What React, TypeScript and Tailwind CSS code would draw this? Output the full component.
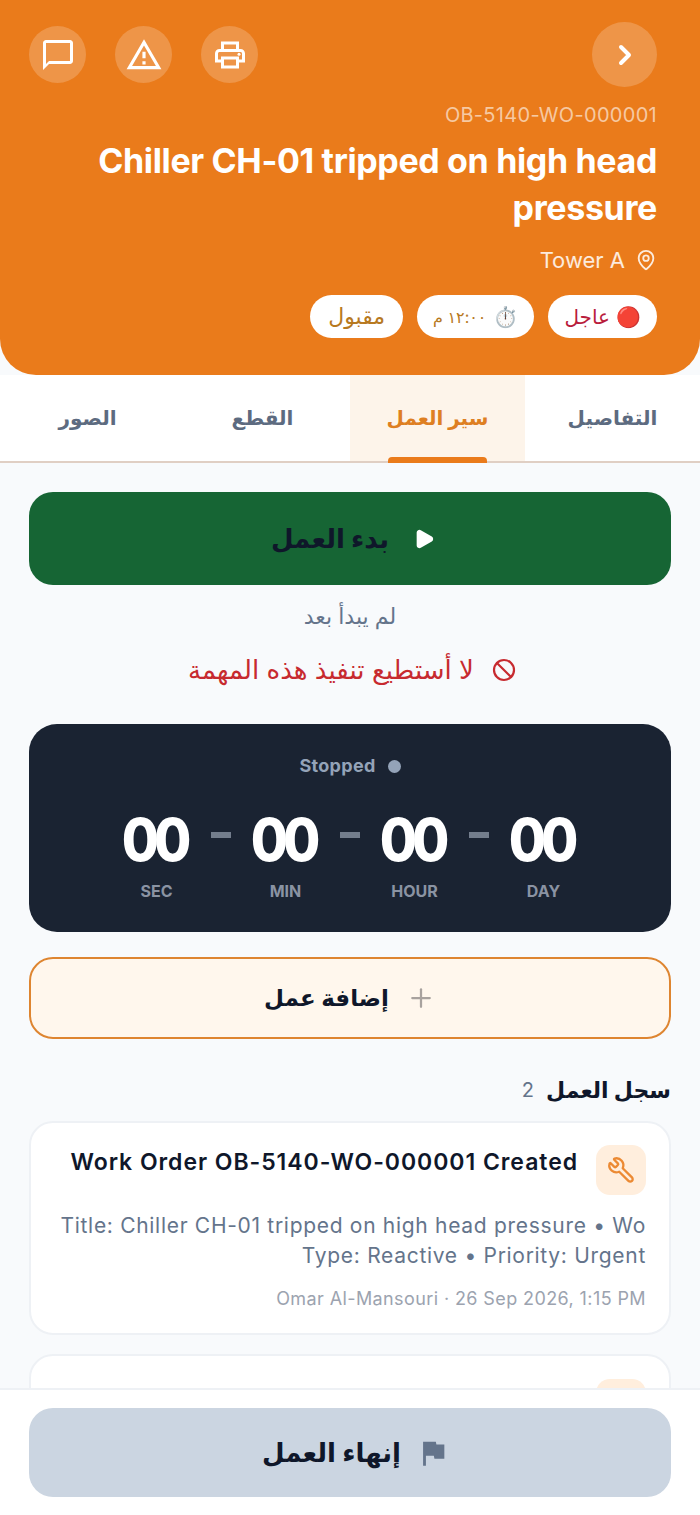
import { Ban, ChevronRight, MapPin, Play, Plus, Wrench } from "lucide-react";
import { MdChatBubbleOutline, MdFlag, MdOutlinePrint, MdOutlineWarningAmber } from "react-icons/md";

const timeUnits = [
  { label: "SEC", value: "00" },
  { label: "MIN", value: "00" },
  { label: "HOUR", value: "00" },
  { label: "DAY", value: "00" },
];

const tabs = ["التفاصيل", "سير العمل", "القطع", "الصور"];

function HeaderButton({ children }: { children: React.ReactNode }) {
  return (
    <button className="w-[57px] h-[57px] rounded-full bg-white/20 flex items-center justify-center text-white">
      {children}
    </button>
  );
}

export default function App() {
  return (
    <div dir="rtl" className="font-['Inter','DejaVu_Sans',sans-serif] w-[700px] h-[1515px] overflow-hidden flex flex-col bg-[#f8fafc]">
      {/* Header */}
      <header className="h-[375px] shrink-0 bg-[#ea7b1b] rounded-b-[36px] px-[43px] pt-[22px] text-white">
        <div className="flex items-center justify-between -ml-[14px]">
          <button className="w-[65px] h-[65px] rounded-full bg-white/20 flex items-center justify-center">
            <ChevronRight size={32} strokeWidth={3} />
          </button>
          <div className="flex gap-[29px]">
            <HeaderButton><MdOutlinePrint size={36} /></HeaderButton>
            <HeaderButton><MdOutlineWarningAmber size={38} /></HeaderButton>
            <HeaderButton><MdChatBubbleOutline size={36} /></HeaderButton>
          </div>
        </div>
        <div className="mt-[14px] text-[20px] leading-[28px] tracking-[0.3px] text-white/60 text-right" dir="ltr">OB-5140-WO-000001</div>
        <h1 className="mt-[8px] text-[34px] leading-[47px] font-bold tracking-[-0.35px] text-right">
          Chiller CH-01 tripped on high head pressure
        </h1>
        <div className="mt-[14px] flex items-center gap-[10px] text-[22px] leading-[30px] text-white/85">
          <MapPin size={22} strokeWidth={2} />
          <span>Tower A</span>
        </div>
        <div className="mt-[20px] flex gap-[14px] text-[20px]">
          <span className="h-[43px] px-[16px] rounded-full bg-white text-[#b91c3c] flex items-center gap-[6px]">
            <span>🔴</span>
            <span>عاجل</span>
          </span>
          <span className="h-[43px] px-[16px] rounded-full bg-white text-[#b7791f] flex items-center gap-[7px]">
            <span>⏱️</span>
            <span className="text-[16px]">١٢:٠٠ م</span>
          </span>
          <span className="h-[43px] px-[18px] rounded-full bg-white text-[#b7791f] text-[22px] flex items-center">مقبول</span>
        </div>
      </header>

      {/* Tabs */}
      <nav className="h-[88px] shrink-0 grid grid-cols-4 bg-white border-b-2 border-[#e0cfc4]">
        {tabs.map((tab, i) => (
          <div
            key={tab}
            className={
              i === 1
                ? "relative flex items-center justify-center bg-[#fdf4ea] text-[#de7f22] text-[20px] font-bold"
                : "flex items-center justify-center text-[#5d6b80] text-[20px] font-bold"
            }
          >
            {tab}
            {i === 1 && <span className="absolute bottom-[-2px] left-[38px] right-[38px] h-[6px] rounded-t-[4px] bg-[#ea7b1b]" />}
          </div>
        ))}
      </nav>

      {/* Content */}
      <main className="flex-1 min-h-0 overflow-hidden px-[29px] pt-[29px]">
        <button className="w-full h-[93px] pl-[6px] rounded-[24px] bg-[#166534] flex items-center justify-center gap-[24px] text-[#0f172a] text-[26px] font-bold">
          <Play size={22} fill="white" stroke="white" />
          <span>بدء العمل</span>
        </button>
        <p className="mt-[16px] text-center text-[22px] leading-[30px] text-[#64748b]">لم يبدأ بعد</p>
        <div className="mt-[24px] pl-[4px] flex items-center justify-center gap-[18px] text-[#c72a2f] text-[26px] leading-[30px]">
          <Ban size={24} strokeWidth={2.2} />
          <span>لا أستطيع تنفيذ هذه المهمة</span>
        </div>

        <section className="mt-[39px] h-[208px] rounded-[28px] bg-[#1a2332] pt-[30px]">
          <div className="flex items-center justify-center gap-[12px] text-[#94a3b8] text-[18px] leading-[24px] tracking-[0.3px] font-bold">
            <span className="w-[13px] h-[13px] rounded-full bg-[#94a3b8]" />
            <span>Stopped</span>
          </div>
          <div dir="ltr" className="mt-[33px] flex justify-center items-start gap-[22px]">
            {timeUnits.map((unit, i) => (
              <div key={unit.label} className="flex items-start gap-[22px]">
                {i > 0 && <span className="mt-[21px] w-[20px] h-[6px] bg-[#737d8c]" />}
                <div className="w-[65px] flex flex-col items-center">
                  <span className="inline-block scale-y-110 text-white text-[54px] leading-[58px] font-extrabold tracking-[-5px] pr-[5px]">{unit.value}</span>
                  <span className="mt-[11px] text-[#8a93a3] text-[16px] leading-[22px] font-bold">{unit.label}</span>
                </div>
              </div>
            ))}
          </div>
        </section>

        <button className="mt-[25px] w-full h-[82px] rounded-[24px] bg-[#fff7ed] border-2 border-[#de8530] flex items-center justify-center gap-[17px] text-[#0f172a] text-[23px] font-bold">
          <Plus size={30} className="text-[#a8a29e]" strokeWidth={1.8} />
          <span>إضافة عمل</span>
        </button>

        <div className="mt-[35px] flex items-center gap-[12px]">
          <h2 className="text-[#0f172a] text-[22px] leading-[32px] font-bold">سجل العمل</h2>
          <span className="text-[#64748b] text-[20px]">2</span>
        </div>

        <article className="mt-[15px] h-[214px] rounded-[24px] bg-white border-2 border-[#eef1f5] px-[23px] pt-[22px]">
          <div className="flex items-start gap-[18px]">
            <span className="w-[50px] h-[50px] shrink-0 rounded-[14px] bg-[#ffeedd] flex items-center justify-center text-[#ec8a33]">
              <Wrench size={28} className="-scale-x-100" />
            </span>
            <h3 className="mt-[1px] text-[#0f172a] text-[23px] leading-[32px] tracking-[0.95px] font-semibold whitespace-nowrap" dir="ltr">
              Work Order OB-5140-WO-000001 Created
            </h3>
          </div>
          <p className="mt-[16px] text-[21px] leading-[30px] text-[#64748b] text-right tracking-[0.7px]" dir="rtl">
            Title: Chiller CH-01 tripped on high head pressure • Wo Type: Reactive • Priority: Urgent
          </p>
          <p className="mt-[16px] text-[18px] leading-[24px] tracking-[0.4px] text-[#9ca3af]" dir="rtl">
            Omar Al-Mansouri · 26 Sep 2026, 1:15 PM
          </p>
        </article>

        <article className="mt-[19px] h-[214px] rounded-[24px] bg-white border-2 border-[#eef1f5] px-[23px] pt-[23px]">
          <span className="block w-[50px] h-[50px] rounded-[14px] bg-[#ffeedd]" />
        </article>
      </main>

      {/* Bottom bar */}
      <footer className="h-[127px] shrink-0 bg-white border-t-2 border-[#eef1f5] px-[29px] pt-[18px]">
        <button className="w-full h-[89px] pl-[12px] rounded-[24px] bg-[#cbd5e1] flex items-center justify-center gap-[15px] text-[#0f172a] text-[26px] font-bold">
          <MdFlag size={34} className="text-[#64748b]" />
          <span>إنهاء العمل</span>
        </button>
      </footer>
    </div>
  );
}
